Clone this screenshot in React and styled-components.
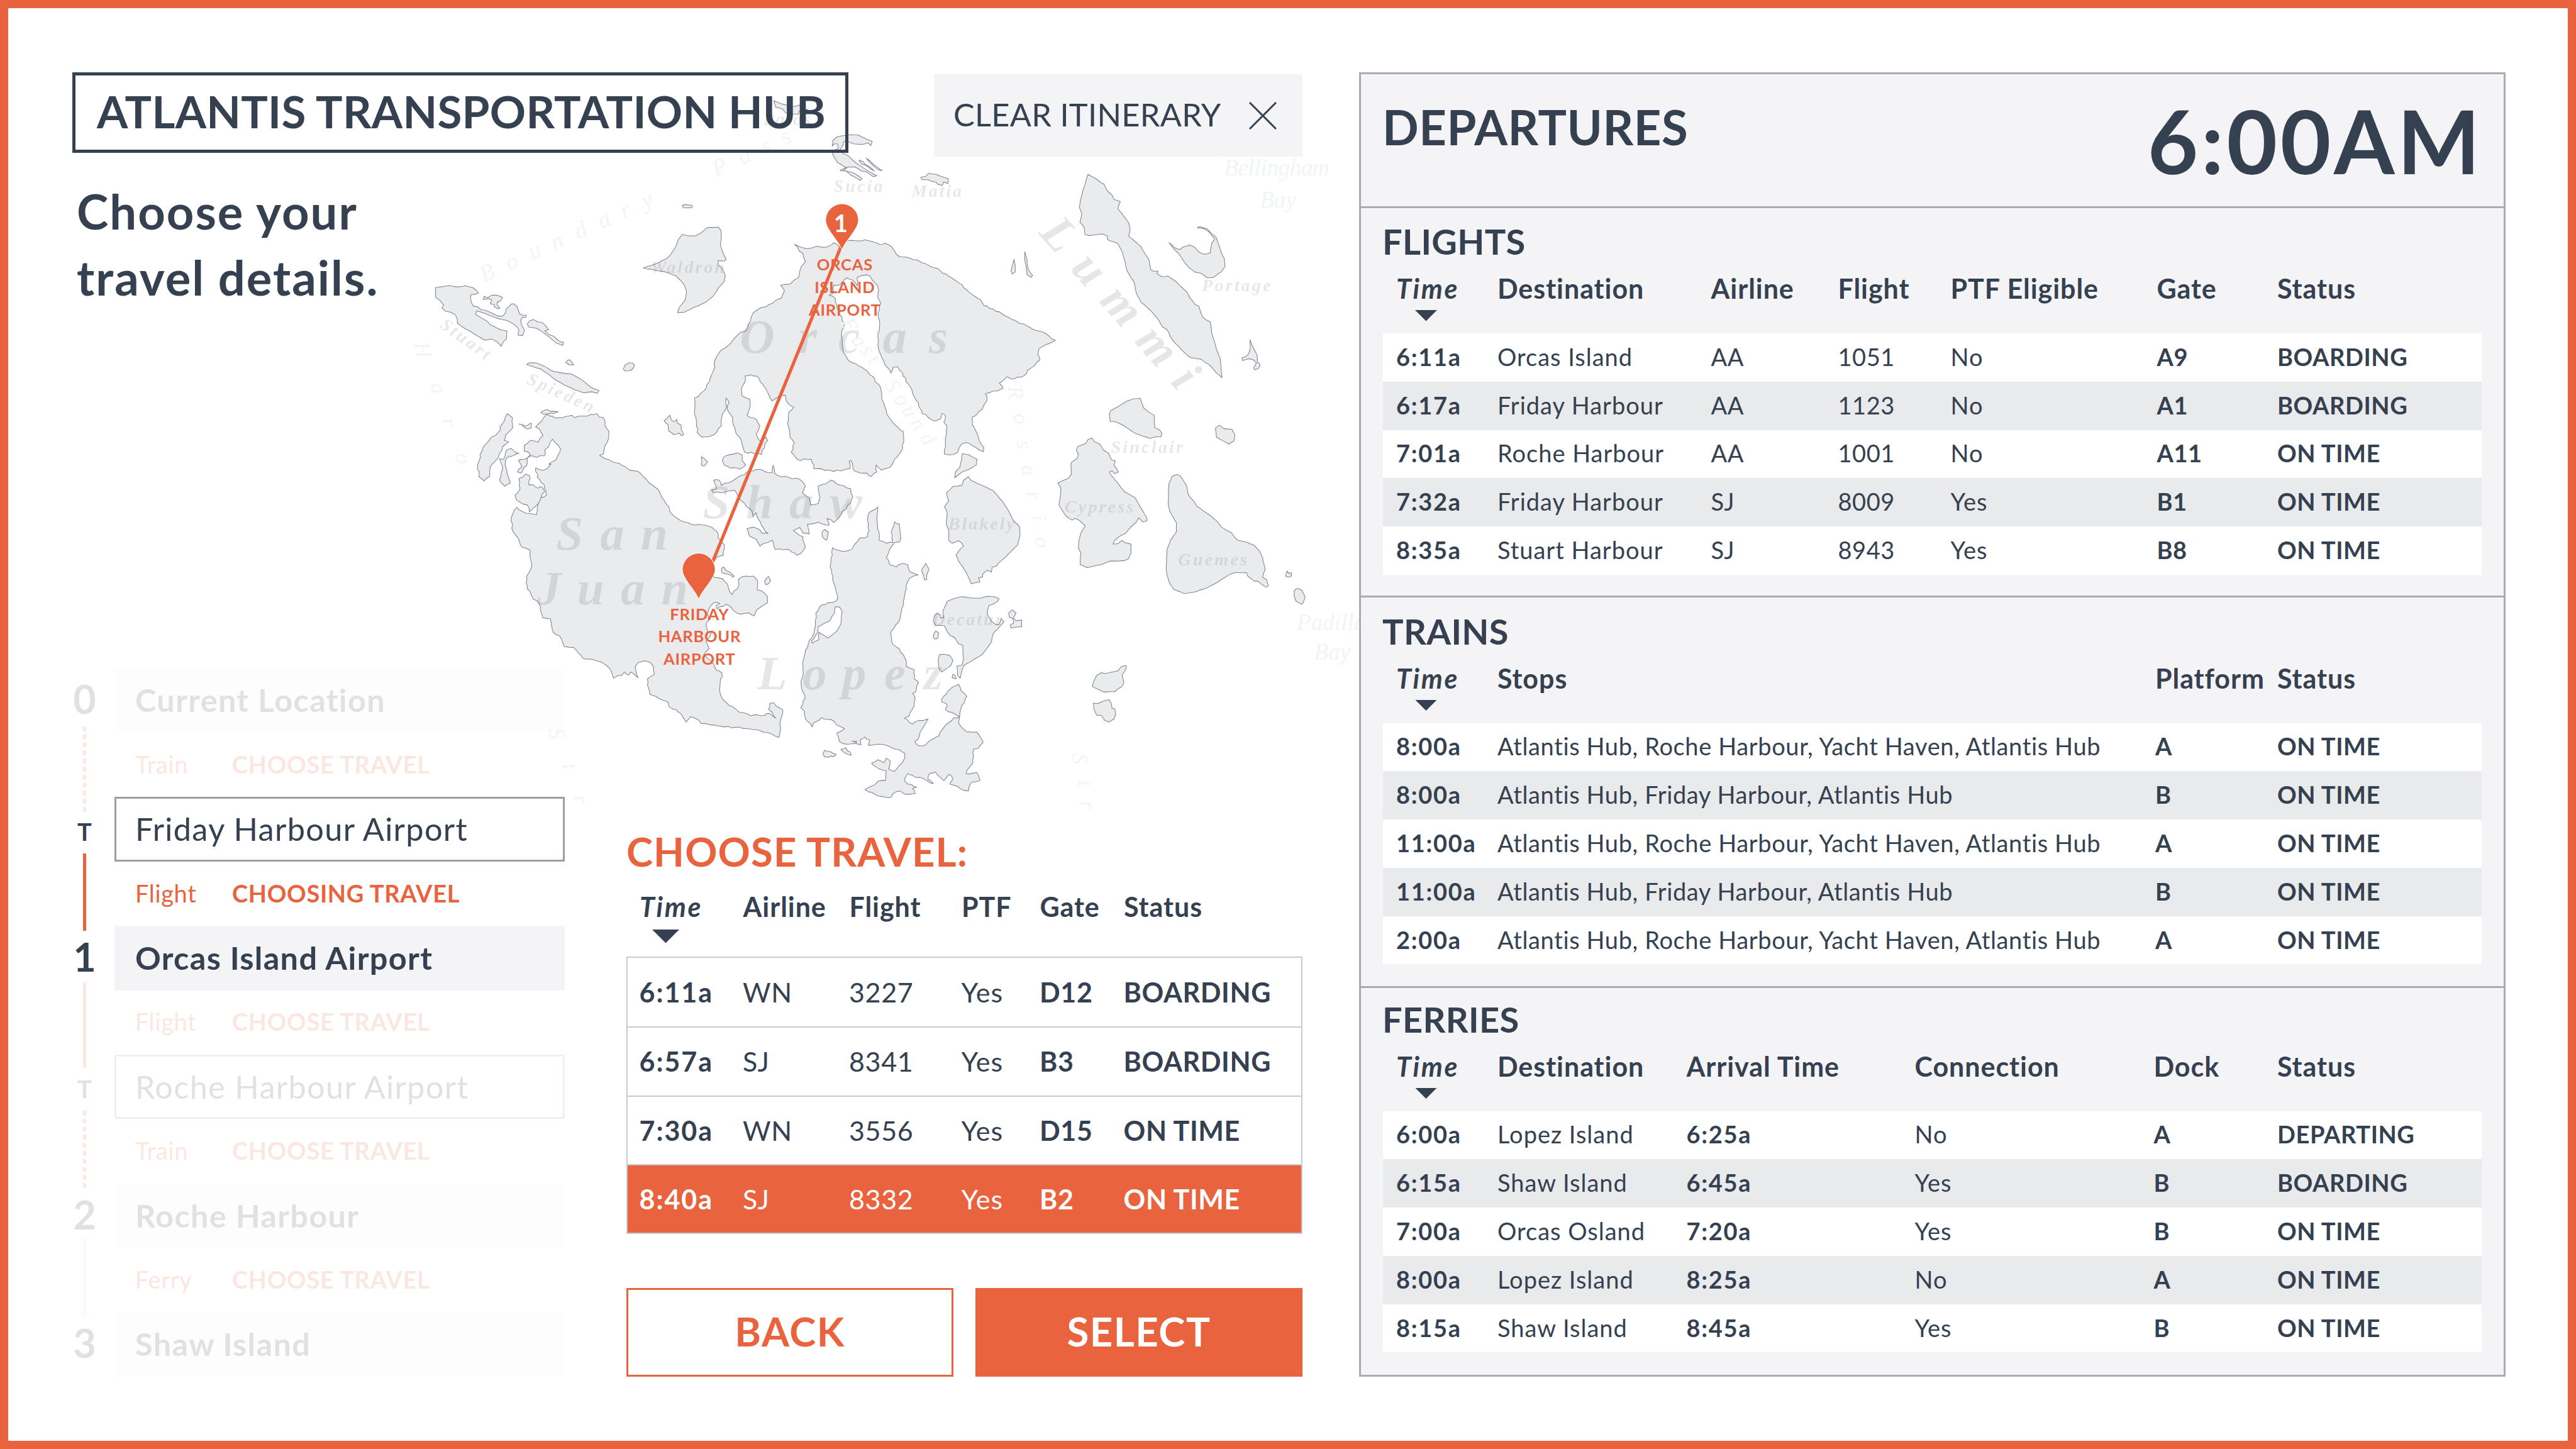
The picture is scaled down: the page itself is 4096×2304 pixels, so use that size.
import React from 'react';
import styled, { createGlobalStyle, css } from 'styled-components';

const navy = '#354050';
const orange = '#e9633e';
const mist = '#f4f4f7';
const rule = '#a7abb3';

const GlobalStyle = createGlobalStyle`
  *, *::before, *::after { box-sizing: border-box; }
  body { margin: 0; background: #fff; }
`;

/* ---------- page frame ---------- */

const Page = styled.div`
  position: relative;
  display: flex;
  gap: 90px;
  width: 4096px;
  height: 2304px;
  padding: 102px;
  overflow: hidden;
  border: 13px solid ${orange};
  background: #fff;
  color: ${navy};
  font-family: Lato, 'Liberation Sans', sans-serif;
  font-weight: 400;
  font-variant-ligatures: none;
`;

const Main = styled.main`
  position: relative;
  display: flex;
  flex: none;
  flex-direction: column;
  width: 1956px;
`;

const TopBar = styled.div`
  display: flex;
  justify-content: space-between;
  align-items: flex-start;
`;

const HubTitle = styled.h1`
  display: flex;
  align-items: center;
  width: 1234px;
  height: 128px;
  margin: 0;
  padding: 0 0 5px 34px;
  border: 5px solid ${navy};
  font-size: 71px;
  font-weight: 700;
  letter-spacing: 0.28px;
  white-space: nowrap;
`;

const ClearButton = styled.button`
  display: flex;
  justify-content: space-between;
  align-items: center;
  width: 586px;
  height: 131px;
  margin: 3px 0 0;
  padding: 0 41px 0 31px;
  border: 0;
  background: ${mist};
  color: ${navy};
  font: 400 50.5px Lato, sans-serif;
  letter-spacing: 0.3px;
`;

const ClearText = styled.span`
  padding-bottom: 4px;
`;

const Prompt = styled.h2`
  margin: 35px 0 0 7px;
  font-size: 76px;
  font-weight: 700;
  line-height: 104.6px;
  letter-spacing: 2px;
`;

const Lower = styled.div`
  display: flex;
  justify-content: space-between;
  align-items: flex-end;
  margin-top: auto;
`;

/* ---------- itinerary ---------- */

const Itinerary = styled.ol`
  width: 783px;
  margin: 0;
  padding: 0;
  list-style: none;
`;

const ItineraryRow = styled.li`
  display: grid;
  grid-template-columns: 39px 716px;
  grid-template-rows: 102.4px;
  column-gap: 28px;
  height: 102.4px;
`;

const faded = css`
  opacity: 0.15;
`;

const StopMarker = styled.div`
  display: flex;
  justify-content: center;
  align-items: center;
  padding-bottom: ${(p) => (p.$transfer ? 0 : 6)}px;
  padding-top: ${(p) => (p.$transfer ? 6 : 0)}px;
  font-size: ${(p) => (p.$transfer ? 38 : 63)}px;
  font-weight: 700;
  ${(p) => p.$faded && faded}
`;

const StopBox = styled.div`
  display: flex;
  align-items: center;
  padding: 0 0 2px ${(p) => (p.$transfer ? 30 : 33)}px;
  border: ${(p) => (p.$transfer ? '3px solid rgba(53, 64, 80, 0.5)' : '0')};
  background: ${(p) => (p.$transfer ? '#fff' : mist)};
  font-size: 50.5px;
  font-weight: ${(p) => (p.$transfer ? 400 : 700)};
  letter-spacing: 1.3px;
  white-space: nowrap;
  ${(p) => p.$faded && faded}
`;

const Rail = styled.div`
  display: flex;
  justify-content: center;
  align-items: flex-start;
  ${(p) => p.$faded && faded}
`;

const RailLine = styled.div`
  flex: none;
  width: ${(p) => p.$width}px;
  height: ${(p) => p.$length}px;
  margin-top: ${(p) => p.$start}px;
  background: ${(p) =>
    p.$dashed
      ? `repeating-linear-gradient(${orange} 0 7.68px, transparent 7.68px 12.8px)`
      : orange};
`;

const Leg = styled.div`
  display: grid;
  grid-template-columns: 154px 1fr;
  align-items: center;
  padding: 0 0 3px 33px;
  color: ${orange};
  font-size: 38px;
  letter-spacing: 0.65px;
  ${(p) => p.$faded && faded}
`;

const LegAction = styled.strong`
  font-weight: 700;
`;

/* ---------- travel chooser ---------- */

const Chooser = styled.section`
  width: 1075px;
`;

const ChooserTitle = styled.h2`
  margin: 0;
  padding: 2px 0 23px;
  color: ${orange};
  font-size: 63.5px;
  font-weight: 700;
  line-height: 76px;
  letter-spacing: 1.1px;
`;

const OptionList = styled.div`
  border: 2px solid #c9cccf;
  height: 441px;
  display: grid;
  grid-template-rows: repeat(4, 1fr);
`;

const chooserColumns = '164.5px 169px 178.5px 124.5px 133.5px 1fr';

const OptionRow = styled.div`
  display: grid;
  grid-template-columns: ${chooserColumns};
  align-items: center;
  padding-left: 18.5px;
  font-size: 43px;
  color: ${(p) => (p.$selected ? '#fff' : navy)};
  background: ${(p) => (p.$selected ? orange : '#fff')};
  & + & { border-top: 2px solid #c9cccf; }
`;

const Actions = styled.div`
  display: grid;
  grid-template-columns: 1fr 1fr;
  gap: 35px;
  margin-top: 86px;
`;

const ActionButton = styled.button`
  height: 141px;
  padding: 0 0 4px;
  border: 3px solid ${orange};
  background: ${(p) => (p.$primary ? orange : '#fff')};
  color: ${(p) => (p.$primary ? '#fff' : orange)};
  font: 700 63.5px Lato, sans-serif;
  letter-spacing: 1.5px;
`;

/* ---------- shared table parts ---------- */

const HeaderRow = styled.div`
  display: grid;
  grid-template-columns: ${(p) => p.$columns};
  align-items: start;
  height: ${(p) => p.$height}px;
  padding: 2px 0 0 21px;
  font-size: 43px;
  font-weight: 700;
  line-height: 50px;
  letter-spacing: 0.95px;
  white-space: nowrap;
`;

const SortedHead = styled.div`
  font-style: italic;
  letter-spacing: 2.6px;
`;

const SortArrow = styled.div`
  width: ${(p) => p.$size}px;
  height: ${(p) => p.$size / 2}px;
  margin: ${(p) => p.$top}px 0 0 ${(p) => p.$left}px;
  background: ${navy};
  clip-path: polygon(0 0, 100% 0, 50% 100%);
`;

const Cell = styled.span`
  font-weight: ${(p) => (p.$bold ? 700 : 400)};
  letter-spacing: ${(p) => p.$spacing || 0}em;
  white-space: nowrap;
`;

/* ---------- departures board ---------- */

const Board = styled.aside`
  position: relative;
  display: grid;
  grid-template-rows: 210px 619px 620.5px 1fr;
  flex: none;
  width: 1823px;
  height: 2074px;
  border: 3px solid ${rule};
  background: ${mist};
`;

const BoardHeader = styled.header`
  display: flex;
  justify-content: space-between;
  align-items: flex-start;
  padding: 26px 33px 0 34px;
`;

const BoardTitle = styled.h2`
  margin: 13px 0 0;
  font-size: 76px;
  font-weight: 700;
  line-height: 90px;
  letter-spacing: 0.5px;
`;

const Clock = styled.div`
  font-size: 139px;
  font-weight: 700;
  line-height: 160px;
  letter-spacing: 4.6px;
`;

const BoardSection = styled.section`
  padding: ${(p) => p.$top}px 35px 0;
  border-top: 3px solid ${rule};
`;

const SectionTitle = styled.h3`
  margin: 0 0 0 -1px;
  padding: 1px 0 15px;
  font-size: 56px;
  font-weight: 700;
  line-height: 67px;
  letter-spacing: 0.3px;
`;

const BoardRow = styled.div`
  display: grid;
  grid-template-columns: ${(p) => p.$columns};
  align-items: center;
  height: 76.8px;
  padding: 0 0 3px 21px;
  font-size: 38px;
  background: #fff;
  &:nth-child(even) { background: #e9eaec; }
`;

/* ---------- map ---------- */

const MapLayer = styled.svg`
  position: absolute;
  inset: 0;
  width: 4070px;
  height: 2278px;
`;

// Survey sheets: origin and unit size of each sheet on the map canvas.
const sheets = {
  n: [1700, 150, 1.0587, 0.3827],
  nw: [1000, 300, 0.7653, 0.574],
  ne: [2100, 300, 0.7653, 0.574],
  sw: [1000, 1150, 0.7653, 0.574],
  se: [2100, 1150, 0.8163, 0.574],
};

function place(sheet, list) {
  const [ox, oy, sx, sy] = sheets[sheet];
  return list.trim().split(/\s+/).map((pair) => {
    const [x, y] = pair.split(',').map(Number);
    return [ox + x * sx, oy + y * sy];
  });
}

// Breaks long straight runs of a coast into short irregular steps.
function coastline(parts, rough = 1) {
  const points = parts.flatMap(([sheet, list]) => place(sheet, list));
  let seed = Math.round(points[0][0] * 7 + points[0][1] * 13);
  const random = () => {
    seed = (seed * 1103515245 + 12345) % 2147483648;
    return seed / 2147483648 - 0.5;
  };
  const out = [];
  points.forEach(([x, y], i) => {
    const [nx, ny] = points[(i + 1) % points.length];
    const length = Math.hypot(nx - x, ny - y);
    const steps = Math.max(1, Math.round(length / 9));
    for (let s = 0; s < steps; s += 1) {
      const t = s / steps;
      const k = s === 0 ? 0 : rough * 4.5;
      out.push(`${(x + (nx - x) * t + random() * k).toFixed(1)},${(y + (ny - y) * t + random() * k).toFixed(1)}`);
    }
  });
  return `M${out.join('L')}Z`;
}

const smoothIslands = [
  [['nw', '107,722 150,714 175,719 205,714 228,722 240,735 246,745 235,752 222,752 221,770 224,788 230,802 243,805 255,818 268,820 290,832 310,845 325,846 334,832 337,815 355,792 362,793 372,805 376,820 380,835 390,842 402,842 400,852 390,850 384,862 386,882 396,905 390,930 375,928 378,905 366,885 345,868 300,852 265,832 240,823 237,838 258,855 277,870 284,882 310,900 322,906 339,910 337,945 328,955 320,976 305,955 290,945 268,950 245,932 215,908 195,893 178,875 178,860 172,840 155,828 140,825 128,810 134,797 122,778 108,765']],
  [['nw', '262,775 265,760 275,766 290,755 305,755 325,765 318,780 308,785 307,797 317,812 310,814 298,805 298,796 285,792 290,775 280,770 268,773']],
  [['nw', '405,880 412,867 425,860 440,872 452,872 465,888 475,905 462,908 475,925 490,932 510,955 523,960 520,972 500,963 470,930 455,915 435,898 410,893']],
  [['nw', '403,1055 410,1048 435,1048 460,1062 490,1085 520,1092 550,1097 575,1115 590,1130 610,1152 638,1168 632,1180 615,1173 590,1178 560,1165 525,1143 495,1120 475,1098 450,1075 425,1065']],
  [['nw', '530,1046 537,1036 543,1035 556,1056 542,1057']],
  [['nw', '717,1075 722,1058 735,1048 746,1048 753,1058 748,1073 738,1082 722,1083']],
  [['nw', '908,367 916,363 940,366 940,376 912,377']],
  [['nw', '782,637 830,615 855,598 870,580 885,550 895,515 908,492 930,498 952,498 970,485 990,462 1025,460 1034,475 1035,505 1032,540 1040,570 1051,600 1045,607 1025,605 1025,622 1038,640 1048,670 1045,695 1025,725 1008,760 985,785 960,802 940,812 915,828 893,831 900,805 918,775 922,740 915,712 902,690 888,672 855,655 820,647 800,642']],
  [['nw', '1395,110 1397,85 1410,70 1435,64 1455,60 1480,62 1500,75 1525,90 1520,108 1512,96 1495,102 1465,100 1440,85 1432,92 1430,105 1420,125 1432,143 1445,150 1475,185 1500,208 1540,238 1528,242 1508,222 1490,218 1470,200 1445,200 1432,215 1455,222 1470,230 1492,250 1485,258 1455,235 1440,218 1420,215 1440,203 1412,180 1398,150 1395,132 1415,120 1412,100 1402,100']],
  [['nw', '1505,162 1518,174 1530,190 1557,216 1545,212 1520,185']],
  [['nw', '1482,170 1497,178 1500,188 1515,198 1532,218 1520,210 1503,192 1490,188']],
  [['ne', '245,245 262,240 270,228 295,232 310,240 335,252 333,272 320,264 315,280 300,275 295,266 280,262 268,255 250,255']],
  [['n', '210,262 228,282 258,300 270,290 275,308 290,320 270,328 268,350 250,345 238,340 230,315 215,305']],
  [['ne', '788,232 815,252 840,275 850,302 868,325 872,340 893,350 885,380 905,415 920,442 925,470 920,500 940,522 960,545 973,575 985,600 992,645 1003,652 1015,650 1012,662 1028,675 1048,672 1075,697 1085,712 1110,742 1120,768 1135,795 1148,803 1160,850 1172,862 1185,870 1190,920 1200,962 1205,990 1217,1030 1223,1112 1205,1092 1185,1060 1155,1032 1120,1025 1100,1002 1085,980 1060,945 1045,905 1030,892 1015,858 990,820 960,785 945,745 938,700 915,650 906,600 900,570 885,532 852,515 850,498 835,490 820,492 790,497 778,492 775,460 762,440 768,405 760,375 768,320']],
  [['ne', '1051,527 1070,550 1085,558 1098,545 1118,538 1135,548 1150,570 1165,578 1185,572 1190,530 1200,512 1180,480 1165,468 1143,463 1150,458 1175,468 1205,507 1218,560 1230,595 1233,630 1220,655 1195,678 1175,680 1155,660 1135,655 1115,635 1100,610 1085,580 1070,560']],
  [['ne', '548,600 552,625 552,655 542,663 538,650']],
  [['ne', '583,567 590,600 593,640 600,657 608,668 603,678 590,665 588,640 583,600']],
  [['ne', '1314,948 1325,985 1337,1015 1338,1045 1347,1055 1342,1072 1330,1078 1326,1070 1335,1048 1325,1035 1310,1030 1290,1038 1288,1025 1300,1022 1310,1008 1315,980']],
  [['ne', '857,1270 862,1255 885,1238 915,1213 935,1203 958,1201 968,1242 985,1260 1003,1275 1005,1328 1020,1338 1028,1352 1025,1368 1010,1368 990,1375 960,1362 940,1352 910,1325 890,1310 875,1302 860,1302']],
  [['ne', '1202,1330 1215,1318 1228,1332 1255,1335 1265,1360 1262,1385 1245,1400 1235,1392 1205,1370']],
  [['ne', '800,1373 810,1390 828,1402 838,1425 855,1440 865,1468 877,1472 872,1490 887,1520 875,1528 866,1515 857,1520'], ['se', '805,45 825,80 850,125 882,150 900,195 918,238 918,252 905,255 893,238 885,258 868,280 853,305 835,318 820,335 815,352 830,350 842,335 850,345 870,352 870,390 862,415 850,423 820,425 805,425 780,440 755,447 735,453 715,440 717,390 710,370 712,330 720,295 730,272 715,252 700,240 690,248 672,230 660,205 650,180 656,130 655,105 647,87 665,75 680,65 688,50 687,15'], ['ne', '733,1480 752,1462 757,1445 750,1425 755,1410 780,1397 788,1380']],
  [['se', '985,90 995,58 1010,50 1020,57 1038,95 1045,140 1062,168 1070,188 1105,222 1130,250 1145,278 1175,302 1183,318 1195,335 1225,345 1245,357 1260,380 1270,410 1278,460 1270,495 1282,505 1288,532 1280,538 1255,512 1245,512 1225,490 1222,475 1185,475 1165,487 1140,510 1100,542 1060,560 1030,565 1000,548 985,515 977,465 979,380 990,335 1008,298 1008,260 988,210 983,180']],
  [['se', '1340,490 1345,468 1350,478 1358,475 1358,490 1348,495']],
  [['se', '1366,555 1372,545 1378,543 1390,552 1400,580 1393,608 1387,612 1372,598 1367,580']],
  [['se', '780,908 790,912 830,900 840,882 855,877 855,890 843,918 848,950 843,968 830,978 820,990 788,992 752,968 755,950 765,920']],
  [['se', '755,1040 770,1042 778,1035 803,1025 810,1042 812,1062 820,1065 823,1090 818,1108 803,1122 790,1115 780,1093 765,1092 757,1065']],
  [['se', '232,465 245,435 255,460 248,485 248,505 241,507 238,485']],
  [['ne', '380,1440 400,1445 428,1465 425,1490 400,1510 380,1520 355,1545 358,1520 372,1500 378,1465']],
  [['se', '383,523 372,485 360,455 345,425 337,400 345,382 360,360 355,348 345,337 325,348 315,335 315,290 308,270 310,215 302,190 315,165 308,130 328,102 355,97 360,75 375,60 382,75 420,100 450,120 480,170 500,215 512,250 530,275 532,310 525,355 510,375 490,405 465,435 460,447 447,452 445,472 432,465 418,482 418,495 405,497 410,515']],
  [['se', '300,668 297,640 310,600 335,585 355,579 385,585 412,586 430,578 455,580 468,588 465,598 450,612 437,618 432,655 445,685 458,700 468,700 475,675 483,688 470,708 450,740 445,775 430,805 418,828 395,848 360,878 355,900 350,933 342,920 340,880 355,875 360,850 358,790 345,783 332,755 320,748 310,730 302,705 290,703 275,705 268,685 272,660 280,650 288,658 290,672']],
  [['se', '497,650 508,636 520,650 512,672 520,683 537,680 537,710 525,710 505,715 502,702 513,692 510,673 500,668']],
  [['se', '268,745 275,728 284,735 282,758 275,763 269,758']],
  [['se', '283,850 287,830 300,828 318,833 328,855 320,880 293,905 285,888']],
  [['se', '325,930 328,915 335,920 337,935']],
];

const roughIslands = [
  [['nw', '849,1298 862,1282 868,1275 876,1300 884,1302 890,1292 892,1308 905,1318 913,1360 905,1362 898,1352 880,1358 865,1345 862,1315']],
  [['nw', '970,1455 976,1458 990,1475 978,1495 970,1490']],
  [['nw', '1038,1470 1050,1450 1085,1438 1103,1447 1103,1470 1114,1490 1095,1508 1065,1503 1045,1490']],
  [['nw', '449,1262 470,1250 480,1258 505,1260 490,1268 458,1270']],
  [['nw', '340,1268 357,1285 358,1330 335,1360 330,1383 345,1390 325,1410 315,1440 310,1460 300,1475 285,1500 283,1540 265,1559 248,1540 244,1490 258,1430 270,1400 290,1368 310,1350 330,1300']],
  [['nw', '315,1463 328,1465 338,1425 352,1418 378,1440 355,1452 338,1460 333,1490 340,1530 350,1568 332,1582 315,1555 325,1510 318,1475']],
  [['nw', '377,1312 400,1322 418,1308 418,1330 405,1334']],
  [['sw', '378,68 400,48 412,55 410,95 430,102 440,110 448,102 462,125 450,150 438,180 412,212 405,182 390,178 370,160 365,140 382,110']],
  [['nw', '432,1325 452,1300 468,1270 495,1287 520,1285 550,1275 560,1285 600,1278 632,1268 638,1282 655,1290 657,1320 670,1345 665,1390 655,1420 652,1442 640,1448 680,1475 710,1490 750,1515 765,1518 800,1567'], ['sw', '830,115 842,150 865,190 868,212 905,252 935,265 970,268 1005,280 1022,300 1025,325 1045,355 1042,400 1022,408 1010,430 1005,470 1012,495 1040,502 1055,525 1060,550 1070,570 1087,545 1092,530 1090,505 1115,490 1140,490 1152,508 1152,550 1172,560 1185,580 1185,605 1165,622 1150,635 1143,662 1125,650 1098,655 1075,640 1060,618 1050,612 1020,632 1018,618 1030,608 1010,605 1000,620 990,650 995,680 985,700 990,730 1002,735 985,775 995,805 978,830 990,845 1010,870 1020,898 1037,910 1030,970 1036,1015 1060,1050 1095,1080 1130,1095 1150,1090 1175,1093 1192,1085 1212,1105 1200,1080 1188,1065 1192,1042 1205,1038 1212,1052 1235,1070 1228,1110 1228,1150 1222,1188 1200,1175 1150,1155 1080,1145 1020,1138 990,1130 970,1128 960,1112 935,1098 920,1122 910,1100 895,1078 865,1055 862,1035 830,1018 802,1000 795,960 795,935 818,915 815,885 802,862 785,857 765,865 755,885 765,930 740,905 735,918 720,905 712,920 700,920 685,932 672,890 655,870 620,852 585,845 565,812 555,798 525,795 515,760 490,735 480,675 455,670 448,640 445,612 425,590 405,545 402,490 420,450 415,380 388,365 375,325 360,300 352,250 360,215 372,193 400,218 435,225 438,190 450,150 467,140 460,95 438,62 432,22 455,32 470,25 482,5'], ['nw', '475,1487 500,1465 513,1420 487,1378 475,1410 462,1425 460,1450 435,1458 422,1450 405,1460 405,1480 395,1500 385,1525 373,1520 388,1500 376,1470 405,1460 415,1445 395,1430 395,1405 415,1383 440,1392 456,1362 445,1335']],
  [['sw', '1035,460 1042,450 1050,465 1065,475 1077,490 1072,495 1055,482 1037,475']],
  [['sw', '1188,492 1195,510 1180,528 1175,512']],
  [['sw', '1362,300 1370,288 1383,300 1380,325 1375,335 1363,320']],
  [['nw', '1272,535 1290,545 1310,553 1330,550 1350,543 1380,545 1400,528 1427,548 1440,520 1480,520 1500,515'], ['ne', '63,515 90,525 110,535 130,530 150,545 175,588 210,595 250,615 300,640 345,680 380,710 400,740 440,775 450,800 480,815 540,860 600,895 650,920 682,950 650,970 630,985 625,1010 632,1035 615,1060 592,1080 588,1095 570,1110 540,1118 525,1108 500,1135 512,1158 480,1170 455,1182 460,1210 445,1248 412,1283 412,1315 427,1350 435,1385 450,1415 448,1432 425,1415 405,1398 385,1395 370,1415 365,1435 350,1445 322,1442 325,1390 330,1320 320,1305 325,1275 315,1266 310,1290 292,1300 270,1285 250,1268 230,1210 205,1140 185,1090 170,1065 155,1068 148,1092 125,1040 108,985 106,920 112,880 107,830 115,790 105,765 108,730 95,700 80,672 55,670 38,680 40,715 25,690 5,680'], ['nw', '1433,690 1420,710 1400,712 1400,745 1385,755 1405,768 1410,800 1420,840 1435,880 1425,930 1432,1005 1450,1040 1500,1075 1530,1110 1535,1130'], ['ne', '115,1155 120,1210 135,1270 165,1320 188,1345 190,1390 182,1430 160,1465 145,1500 118,1512 100,1490 103,1520 85,1540 70,1525 40,1520 25,1505 18,1470'], ['nw', '1450,1475 1453,1505 1400,1518 1335,1505 1328,1465 1285,1468 1262,1435 1272,1395 1258,1370 1250,1310 1255,1260 1270,1240 1245,1210 1243,1188 1225,1192 1200,1213 1185,1175 1170,1140 1150,1105 1130,1100 1112,1105 1112,1130 1100,1160 1102,1190 1128,1205 1128,1240 1118,1275 1150,1295 1160,1320 1148,1355 1160,1385 1180,1370 1185,1385 1175,1415 1165,1445 1110,1433 1100,1385 1080,1340 1072,1285 1055,1250 1060,1220 1050,1200 1052,1240 1038,1270 1035,1320 1010,1360 975,1370 957,1350 955,1310 948,1270 948,1200 985,1160 1000,1110 1010,1080 1015,1035 1030,1000 1060,970 1090,925 1120,900 1132,850 1150,820 1190,795 1230,768 1240,735 1228,712 1260,705 1285,680 1290,650 1308,610 1300,575']],
  [['sw', '1127,35 1150,28 1200,42 1203,10 1208,45 1230,60 1290,72 1308,100 1298,130 1320,150 1325,182 1350,175 1355,150 1350,100 1375,90 1392,75 1410,92 1455,112 1462,145 1440,200 1400,258 1378,240 1385,270 1350,257 1315,265 1320,308 1300,305 1290,280 1268,293 1300,320 1308,365 1295,390 1280,400 1255,375 1210,375 1200,335 1185,345 1160,360 1148,330 1125,315 1118,285 1140,278 1160,290 1168,305 1187,305 1165,270 1150,230 1148,215 1138,232 1135,210 1090,150 1078,118 1045,128 1010,130 1003,118 1020,112 1015,92 1010,75 1028,75 1035,98 1080,70']],
  [['se', '293,1035 300,1010 320,980 345,958 352,985 370,1010 355,1050 348,1098 325,1080 305,1068 310,1045']],
  [['sw', '1396,367 1425,382 1460,372 1485,325 1510,320 1515,295 1510,250 1515,215'], ['se', '85,205 99,190 98,270 103,335 125,348 145,345 140,300 150,255 165,265 168,310 165,342 150,345 135,375 125,410 135,440 155,450 175,435 190,440 197,472 222,485 197,498 185,530 177,600 162,690 138,740 145,785 165,805 185,855 185,880 210,895 210,935 223,950 215,990 205,998 213,1020 210,1050 195,1095 180,1105 205,1130 225,1115 252,1108 235,1150 225,1185 212,1205 225,1225 245,1220 260,1200 285,1182 300,1145 330,1103 348,1100 345,1125 370,1165 400,1165 410,1185 420,1210 405,1235 390,1240 388,1300 367,1345 400,1340 410,1375 385,1382 375,1420 350,1410 318,1390 328,1370 315,1348 300,1375 280,1350 275,1338 257,1345 252,1370 268,1388 258,1385 240,1368 215,1362 190,1345 180,1375 190,1390 218,1402 205,1410 213,1432 185,1435 168,1420 145,1432 140,1447 100,1442 60,1415 100,1378 122,1375 125,1332 100,1322 80,1300 100,1285 118,1298 125,1278 137,1290 132,1325 150,1335 165,1308 182,1275 180,1255 165,1242 130,1225 110,1218 70,1222 75,1200 60,1187 45,1200 48,1220 20,1205'], ['sw', '1475,1205 1470,1215 1445,1218 1418,1205 1410,1170 1435,1150 1410,1135 1390,1110 1360,1103 1335,1125 1330,1143 1308,1108 1305,1075 1293,1060 1307,1020 1295,975 1300,880 1308,810 1330,755 1340,710 1342,650 1360,615 1405,600 1412,590 1400,520 1388,450 1395,400']],
  [['sw', '1365,1260 1370,1245 1390,1250 1408,1262 1400,1272 1370,1272']],
  [['sw', '1423,1240 1440,1233 1457,1265 1435,1255']],
];

const lagoons = [
  [['sw', '1405,622 1420,625 1428,645 1422,700 1410,728 1380,758 1352,733 1352,765 1330,780 1328,770 1348,735 1350,708 1388,682 1402,650']],
];

const landNames = [
  { text: 'Orcas', x: '1838 1983 2083 2193 2308', y: 876 },
  { text: 'San', x: '1382 1491 1592', y: 1366 },
  { text: 'Juan', x: '1334 1434 1542 1643', y: 1501 },
  { text: 'Shaw', x: '1746 1854 1961 2062', y: 1288 },
  { text: 'Lopez', x: '1882 1994 2092 2197 2295', y: 1713 },
];

const isletNames = [
  { text: 'Waldron', x: 1616, y: 678, w: 184 },
  { text: 'Patos', x: 1896, y: 311, w: 118 },
  { text: 'Sucia', x: 2071, y: 476, w: 122 },
  { text: 'Matia', x: 2264, y: 489, w: 125 },
  { text: 'Portage', x: 2986, y: 724, w: 171 },
  { text: 'Sinclair', x: 2760, y: 1125, w: 179 },
  { text: 'Cypress', x: 2645, y: 1273, w: 171 },
  { text: 'Blakely', x: 2356, y: 1315, w: 164 },
  { text: 'Guemes', x: 2927, y: 1405, w: 171 },
  { text: 'Decatur', x: 2316, y: 1553, w: 174 },
  { text: 'Stuart', x: 1091, y: 812, w: 142, r: 36 },
  { text: 'Spieden', x: 1306, y: 952, w: 178, r: 24.5 },
];

const waterLetters = [
  ['H', 1030, 853, 80], ['a', 1069, 955, 78], ['r', 1097, 1043, 76], ['o', 1130, 1130, 74],
  ['S', 1363, 1812, 80], ['t', 1396, 1900, 78], ['r', 1423, 1980, 76],
  ['E', 2087, 800, 62], ['a', 2113, 844, 58], ['s', 2135, 872, 54], ['t', 2153, 898, 50],
  ['S', 2196, 955, 60], ['o', 2219, 990, 60], ['u', 2239, 1018, 60], ['n', 2260, 1050, 58], ['d', 2284, 1088, 56],
  ['R', 2504, 960, 84], ['o', 2518, 1029, 84], ['s', 2526, 1096, 84], ['a', 2538, 1157, 84],
  ['r', 2549, 1222, 84], ['i', 2562, 1281, 84], ['o', 2571, 1336, 84],
  ['S', 2664, 1873, 86], ['t', 2678, 1940, 86], ['r', 2685, 1991, 86],
];

const Water = styled.g`
  fill: #f1f5f5;
  font-family: 'Liberation Serif', serif;
  font-style: italic;
`;

const Land = styled.g`
  fill: ${navy};
  fill-opacity: 0.13;
  font-family: 'Liberation Serif', serif;
  font-style: italic;
  font-weight: 700;
`;

const Coast = styled.g`
  fill: #eaebed;
  stroke: #808793;
  stroke-width: 1.7px;
  stroke-linejoin: round;
`;

const Places = styled.g`
  fill: ${orange};
  font-family: Lato, sans-serif;
  font-size: 40px;
  font-weight: 700;
  letter-spacing: 1.1px;
  text-anchor: middle;
`;

const PinNumber = styled.text`
  fill: #fff;
  font-family: Lato, sans-serif;
  font-size: 60px;
  font-weight: 700;
  text-anchor: middle;
`;

function Pin({ x, y, children }) {
  return (
    <g transform={`translate(${x} ${y})`}>
      <path
        d="M0 0 C-9 -22 -40 -50 -40 -72 A40 40 0 0 1 40 -72 C40 -50 9 -22 0 0 Z"
        fill={orange}
        stroke="#fff"
        strokeWidth="3"
        paintOrder="stroke"
      />
      {children && <PinNumber x="-3" y="-43">{children}</PinNumber>}
    </g>
  );
}

function IslandMap() {
  return (
    <MapLayer viewBox="20.3125 20.3125 6359.375 3559.375" aria-label="San Juan Islands">
      <Coast>
        {smoothIslands.map((parts, i) => <path key={i} d={coastline(parts, 0.25)} />)}
        {roughIslands.map((parts, i) => <path key={i} d={coastline(parts, 1)} />)}
        {lagoons.map((parts, i) => <path key={i} d={coastline(parts, 0.5)} fill="#fff" />)}
      </Coast>
      <Water fontSize="58">
        <text
          transform="translate(1202 702) rotate(-24.5)"
          x="0 70 133 193 258 322 383 441 634 705 767 822"
        >
          BoundaryPass
        </text>
        <text x="3041" y="436" textLength="262">Bellingham</text>
        <text x="3130" y="516">Bay</text>
        <text x="3222" y="1566">Padilla</text>
        <text x="3265" y="1639">Bay</text>
        {waterLetters.map(([letter, x, y, r], i) => (
          <text key={i} fontSize="54" transform={`translate(${x} ${y}) rotate(${r})`}>{letter}</text>
        ))}
      </Water>
      <Land fontSize="120">
        {landNames.map((n) => <text key={n.text} x={n.x} y={n.y}>{n.text}</text>)}
        <text transform="translate(2579 580) rotate(48.5)" x="0 118 226 359 494">Lummi</text>
      </Land>
      <Land fontSize="44">
        {isletNames.map((n) => (
          <text key={n.text} transform={`translate(${n.x} ${n.y}) rotate(${n.r || 0})`} textLength={n.w}>
            {n.text}
          </text>
        ))}
      </Land>
      <Places>
        <text x="2099" y="672">ORCAS</text>
        <text x="2099" y="728">ISLAND</text>
        <text x="2099" y="784">AIRPORT</text>
        <text x="1738" y="1540">FRIDAY</text>
        <text x="1738" y="1596">HARBOUR</text>
        <text x="1738" y="1652">AIRPORT</text>
      </Places>
      <line x1="2092" y1="606" x2="1738" y2="1476" stroke={orange} strokeWidth="8" />
      <Pin x={2092} y={619}>1</Pin>
      <Pin x={1736} y={1487} />
    </MapLayer>
  );
}

/* ---------- data ---------- */

const itinerary = [
  { stop: 'Current Location', mark: '0', faded: true },
  { leg: 'Train', action: 'CHOOSE TRAVEL', faded: true, line: { width: 5, start: -10, length: 136, dashed: true } },
  { stop: 'Friday Harbour Airport', mark: 'T', transfer: true },
  { leg: 'Flight', action: 'CHOOSING TRAVEL', line: { width: 5, start: -13, length: 123 } },
  { stop: 'Orcas Island Airport', mark: '1' },
  { leg: 'Flight', action: 'CHOOSE TRAVEL', faded: true, line: { width: 5, start: -13, length: 136 } },
  { stop: 'Roche Harbour Airport', mark: 'T', transfer: true, faded: true },
  { leg: 'Train', action: 'CHOOSE TRAVEL', faded: true, line: { width: 5, start: -13, length: 123, dashed: true } },
  { stop: 'Roche Harbour', mark: '2', faded: true },
  { leg: 'Ferry', action: 'CHOOSE TRAVEL', faded: true, line: { width: 1, start: -16, length: 127 } },
  { stop: 'Shaw Island', mark: '3', faded: true },
];

const options = [
  ['6:11a', 'WN', '3227', 'Yes', 'D12', 'BOARDING'],
  ['6:57a', 'SJ', '8341', 'Yes', 'B3', 'BOARDING'],
  ['7:30a', 'WN', '3556', 'Yes', 'D15', 'ON TIME'],
  ['8:40a', 'SJ', '8332', 'Yes', 'B2', 'ON TIME'],
];

const sections = [
  {
    title: 'FLIGHTS',
    top: 18,
    columns: '161px 339.5px 202px 179px 328px 191.5px 1fr',
    heads: ['Time', 'Destination', 'Airline', 'Flight', 'PTF Eligible', 'Gate', 'Status'],
    bold: [0, 5, 6],
    rows: [
      ['6:11a', 'Orcas Island', 'AA', '1051', 'No', 'A9', 'BOARDING'],
      ['6:17a', 'Friday Harbour', 'AA', '1123', 'No', 'A1', 'BOARDING'],
      ['7:01a', 'Roche Harbour', 'AA', '1001', 'No', 'A11', 'ON TIME'],
      ['7:32a', 'Friday Harbour', 'SJ', '8009', 'Yes', 'B1', 'ON TIME'],
      ['8:35a', 'Stuart Harbour', 'SJ', '8943', 'Yes', 'B8', 'ON TIME'],
    ],
  },
  {
    title: 'TRAINS',
    top: 18.5,
    columns: '161px 1046px 194px 1fr',
    heads: ['Time', 'Stops', 'Platform', 'Status'],
    bold: [0, 2, 3],
    rows: [
      ['8:00a', 'Atlantis Hub, Roche Harbour, Yacht Haven, Atlantis Hub', 'A', 'ON TIME'],
      ['8:00a', 'Atlantis Hub, Friday Harbour, Atlantis Hub', 'B', 'ON TIME'],
      ['11:00a', 'Atlantis Hub, Roche Harbour, Yacht Haven, Atlantis Hub', 'A', 'ON TIME'],
      ['11:00a', 'Atlantis Hub, Friday Harbour, Atlantis Hub', 'B', 'ON TIME'],
      ['2:00a', 'Atlantis Hub, Roche Harbour, Yacht Haven, Atlantis Hub', 'A', 'ON TIME'],
    ],
  },
  {
    title: 'FERRIES',
    top: 15,
    columns: '161px 300.5px 363px 380px 196.5px 1fr',
    heads: ['Time', 'Destination', 'Arrival Time', 'Connection', 'Dock', 'Status'],
    bold: [0, 2, 4, 5],
    rows: [
      ['6:00a', 'Lopez Island', '6:25a', 'No', 'A', 'DEPARTING'],
      ['6:15a', 'Shaw Island', '6:45a', 'Yes', 'B', 'BOARDING'],
      ['7:00a', 'Orcas Osland', '7:20a', 'Yes', 'B', 'ON TIME'],
      ['8:00a', 'Lopez Island', '8:25a', 'No', 'A', 'ON TIME'],
      ['8:15a', 'Shaw Island', '8:45a', 'Yes', 'B', 'ON TIME'],
    ],
  },
];

const spacingFor = (value) => {
  if (/^\d+:\d+a$/.test(value)) return 0.045;
  if (value.includes('Atlantis')) return 0.0165;
  if (/[a-z]/.test(value)) return 0.026;
  return 0.015;
};

function TableHeads({ heads, columns, height, arrow }) {
  return (
    <HeaderRow $columns={columns} $height={height}>
      {heads.map((head, i) =>
        i === 0 ? (
          <SortedHead key={head}>
            {head}
            <SortArrow $size={arrow.size} $top={arrow.top} $left={arrow.left} />
          </SortedHead>
        ) : (
          <span key={head}>{head}</span>
        ),
      )}
    </HeaderRow>
  );
}

export default function App() {
  return (
    <>
      <GlobalStyle />
      <Page>
        <IslandMap />
        <Main>
          <TopBar>
            <HubTitle>ATLANTIS TRANSPORTATION HUB</HubTitle>
            <ClearButton>
              <ClearText>CLEAR ITINERARY</ClearText>
              <svg width="44" height="44" viewBox="0 0 44 44" stroke={navy} strokeWidth="3">
                <path d="M1 1 L43 43 M43 1 L1 43" />
              </svg>
            </ClearButton>
          </TopBar>
          <Prompt>
            Choose your
            <br />
            travel details.
          </Prompt>
          <Lower>
            <Itinerary>
              {itinerary.map((item, i) =>
                item.stop ? (
                  <ItineraryRow key={i}>
                    <StopMarker $transfer={item.transfer} $faded={item.faded}>{item.mark}</StopMarker>
                    <StopBox $transfer={item.transfer} $faded={item.faded}>{item.stop}</StopBox>
                  </ItineraryRow>
                ) : (
                  <ItineraryRow key={i}>
                    <Rail $faded={item.faded}>
                      <RailLine
                        $width={item.line.width}
                        $start={item.line.start}
                        $length={item.line.length}
                        $dashed={item.line.dashed}
                      />
                    </Rail>
                    <Leg $faded={item.faded}>
                      <span>{item.leg}</span>
                      <LegAction>{item.action}</LegAction>
                    </Leg>
                  </ItineraryRow>
                ),
              )}
            </Itinerary>
            <Chooser>
              <ChooserTitle>CHOOSE TRAVEL:</ChooserTitle>
              <TableHeads
                heads={['Time', 'Airline', 'Flight', 'PTF', 'Gate', 'Status']}
                columns={chooserColumns}
                height={106}
                arrow={{ size: 43, top: 11, left: 20 }}
              />
              <OptionList>
                {options.map((row, r) => (
                  <OptionRow key={r} $selected={r === 3}>
                    {row.map((value, c) => (
                      <Cell key={c} $bold={c === 0 || c > 3} $spacing={spacingFor(value)}>{value}</Cell>
                    ))}
                  </OptionRow>
                ))}
              </OptionList>
              <Actions>
                <ActionButton>BACK</ActionButton>
                <ActionButton $primary>SELECT</ActionButton>
              </Actions>
            </Chooser>
          </Lower>
        </Main>
        <Board>
          <BoardHeader>
            <BoardTitle>DEPARTURES</BoardTitle>
            <Clock>6:00AM</Clock>
          </BoardHeader>
          {sections.map((section) => (
            <BoardSection key={section.title} $top={section.top}>
              <SectionTitle>{section.title}</SectionTitle>
              <TableHeads
                heads={section.heads}
                columns={section.columns}
                height={98}
                arrow={{ size: 35, top: 9, left: 30 }}
              />
              {section.rows.map((row, r) => (
                <BoardRow key={r} $columns={section.columns}>
                  {row.map((value, c) => (
                    <Cell key={c} $bold={section.bold.includes(c)} $spacing={spacingFor(value)}>{value}</Cell>
                  ))}
                </BoardRow>
              ))}
            </BoardSection>
          ))}
        </Board>
      </Page>
    </>
  );
}
